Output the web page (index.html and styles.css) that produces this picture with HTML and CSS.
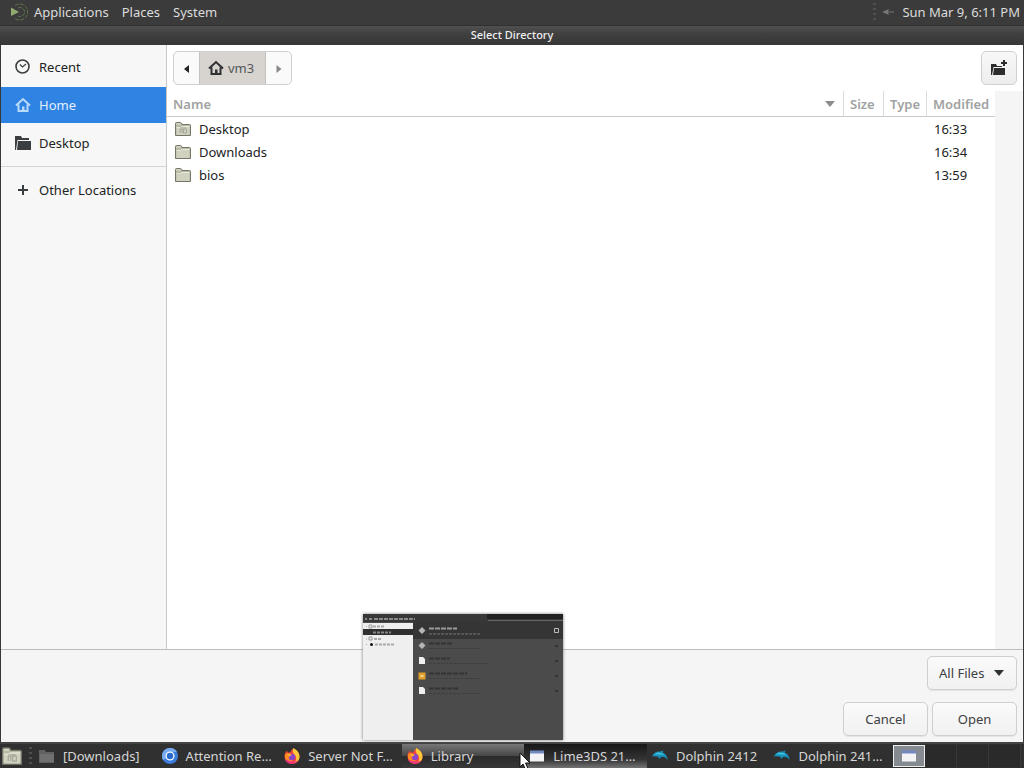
FILE: index.html
```html
<!DOCTYPE html>
<html lang="en">
<head>
<meta charset="utf-8">
<title>Select Directory</title>
<link rel="stylesheet" href="styles.css">
</head>
<body>
<svg class="defs" aria-hidden="true">
  <symbol id="firefox" viewBox="0 0 16 16">
    <path d="M8 1.5c4.300 0 7.500 3 7.500 7.200A7.300 7.300 0 0 1 8 16 7.300 7.300 0 0 1 .5 8.700C.5 6 1.600 3.800 3 2.500l.6 2L6 4.500z" fill="#f5443f"/>
    <path d="M9 0c4 2 6.500 4.500 6.500 8.700 0 3.300-2.500 5.800-5.500 6.300 2-2 3-4 1.500-7C10.500 6 8 5 9 0z" fill="#ffc83a"/>
    <path d="M1 6.500c1-1.500 3-2 5-1L4.500 8c0 3 2 4.500 5 4.500C7 15 2 13.500 1 10z" fill="#ff8a22"/>
    <circle cx="8" cy="9" r="3.200" fill="#8b45c9"/>
    <path d="M3.500 6.500C5 5.500 7 6 8 7.300c-2 0-2 1-3 1.700z" fill="#ffb02e"/>
    <path d="M1 11c2 5.500 10 6.500 13.500 1-3 2.500-8 2.500-13.500-1z" fill="#f0308a"/>
  </symbol>
  <symbol id="dolphin" viewBox="0 0 16 16">
    <path d="M0 8.500C1.500 4.500 5 3 8.500 3.500l3-1-.8 2c3 1.300 4.800 4 4.800 7.500-1.500-2.500-3.500-3.500-6-3.200L7 11 6.500 8.700C4 8 2 8 0 8.500z" fill="#1793bd"/>
    <path d="M2 6.500C5 4 9 4.300 12.500 6.800 9 6.200 5 6 2 6.500z" fill="#48c5dd"/>
  </symbol>
  <symbol id="house" viewBox="0 0 16 16">
    <path d="M1 8.500 8 2l7 6.500M3.500 7.500V14h9V7.500" fill="none" stroke="currentColor" stroke-width="2"/>
    <path d="M7 14V9.500h2.500V14z" fill="currentColor"/>
  </symbol>
  <symbol id="folder" viewBox="0 0 16 16">
    <path d="M.5 14.500v-12q0-1 1-1h4q1 0 1.500 2h7.500q1 0 1 1v10z" fill="#b9baa4" stroke="#74766a"/>
    <path d="M1.500 14V6.500h4l1.500-1h7.500V14z" fill="#d0d1bf"/>
    <path d="M1.500 6.500h4l1.500-1h7.500M1.500 3h4" fill="none" stroke="#e7e8da"/>
  </symbol>
  <symbol id="desk-folder" viewBox="0 0 16 16">
    <use href="#folder"/>
    <path d="M5 12V8.500h2V12M8.500 12V8h3v4zM5 7h6" fill="none" stroke="#a5a798"/>
  </symbol>
  <symbol id="dark-folder" viewBox="0 0 16 16">
    <path d="M0 1h6l1 2h7v2H2.500L1 15H0z" fill="currentColor"/>
    <path d="M3 6h13v9H2z" fill="currentColor"/>
  </symbol>
  <symbol id="window" viewBox="0 0 16 16">
    <path d="M1 3h14v10.500H1z" fill="#f2f3f5"/>
    <path d="M1 2.500h14v3H1z" fill="#7188c2"/>
  </symbol>
</svg>

<header class="panel">
  <nav class="menus">
    <svg class="logo" viewBox="0 0 18 18" aria-hidden="true"><path d="M1 4.500 9 9l-8 4z" fill="#91aa70"/><path d="M5 2.500a8 8 0 1 1 0 13M8 5a4.500 4.500 0 1 1 0 8" fill="none" stroke="#61754a" stroke-dasharray="4 1"/></svg>
    <a href="#">Applications</a>
    <a href="#">Places</a>
    <a href="#">System</a>
  </nav>
  <div class="tray">
    <span class="handle"></span>
    <svg class="tray-icon" viewBox="0 0 14 10" aria-hidden="true"><path d="M0 5l7-3-1 2.500h6v1H6l1 2.500z" fill="#777"/></svg>
    <time>Sun Mar 9, 6:11 PM</time>
  </div>
</header>

<main class="dialog">
  <h1 class="title">Select Directory</h1>
  <div class="browser">
    <nav class="places" aria-label="Places">
      <a class="place" href="#"><svg class="icon" viewBox="0 0 16 16"><circle cx="7.500" cy="7.500" r="6.500" fill="none" stroke="currentColor" stroke-width="1.600"/><path d="m5 5.500 2.500 2.500L11 5" fill="none" stroke="currentColor" stroke-width="1.200"/></svg>Recent</a>
      <a class="place current" href="#"><svg class="icon"><use href="#house"/></svg>Home</a>
      <a class="place" href="#"><svg class="icon"><use href="#dark-folder"/></svg>Desktop</a>
      <hr class="rule">
      <a class="place" href="#"><svg class="icon" viewBox="0 0 16 16"><path d="M8 3v10M3 8h10" stroke="currentColor" stroke-width="2"/></svg>Other Locations</a>
    </nav>
    <section class="files">
      <div class="pathbar">
        <div class="crumbs">
          <button class="step" aria-label="Back"><svg class="tri" viewBox="0 0 8 8"><path d="M6 0v8L1 4z" fill="#222"/></svg></button>
          <button class="crumb"><svg class="icon"><use href="#house"/></svg><span>vm3</span></button>
          <button class="step" aria-label="Forward"><svg class="tri" viewBox="0 0 8 8"><path d="M1.500 0v8l5-4z" fill="#888"/></svg></button>
        </div>
        <button class="new-folder" aria-label="Create Folder"><svg class="icon" viewBox="0 0 16 16"><path d="M0 4h5l1 2h5v1H2.500L1 15H0zM3 8h11v7H2z" fill="#2c2c2c"/><path d="M13 0v6M10 3h6" stroke="#2c2c2c" stroke-width="2"/></svg></button>
      </div>
      <div class="list">
        <table class="table">
          <thead><tr>
            <th class="name"><div class="sort">Name<svg class="sort-arrow" viewBox="0 0 10 6"><path d="M0 0h10L5 6z" fill="#8c8e8d"/></svg></div></th>
            <th class="size">Size</th><th class="type">Type</th><th class="modified">Modified</th>
          </tr></thead>
          <tbody>
            <tr><td><div class="file"><svg class="icon"><use href="#desk-folder"/></svg>Desktop</div></td><td></td><td></td><td>16:33</td></tr>
            <tr><td><div class="file"><svg class="icon"><use href="#folder"/></svg>Downloads</div></td><td></td><td></td><td>16:34</td></tr>
            <tr><td><div class="file"><svg class="icon"><use href="#folder"/></svg>bios</div></td><td></td><td></td><td>13:59</td></tr>
          </tbody>
        </table>
        <div class="gutter"></div>
      </div>
    </section>
  </div>
  <footer class="actions">
    <div class="filter">
      <select class="button filter-select" aria-label="File type"><option>All Files</option></select>
      <svg class="filter-arrow" viewBox="0 0 10 6" aria-hidden="true"><path d="M0 0h10L5 6z" fill="#2e3436"/></svg>
    </div>
    <div class="buttons">
      <button class="button">Cancel</button>
      <button class="button">Open</button>
    </div>
  </footer>
</main>

<footer class="taskbar">
  <button class="show-desktop" aria-label="Show Desktop"><svg class="desk-icon"><use href="#desk-folder"/></svg></button>
  <span class="handle"></span>
  <div class="tasks">
    <button class="task"><svg class="icon" viewBox="0 0 16 16"><path d="M0 2h6l1 2h8v11H0z" fill="#616161"/><path d="M1 6h14v8H1z" fill="#707070"/></svg><span>[Downloads]</span></button>
    <button class="task"><svg class="icon" viewBox="0 0 16 16"><circle cx="8" cy="8" r="8" fill="#3b7ddd"/><path d="M8 0a8 8 0 0 0-7 12l4-2 3-6h7A8 8 0 0 0 8 0z" fill="#78abed"/><circle cx="8" cy="8" r="4.500" fill="#f4f8ff"/><circle cx="8" cy="8" r="3.200" fill="#2869c9"/></svg><span>Attention Re…</span></button>
    <button class="task"><svg class="icon"><use href="#firefox"/></svg><span>Server Not F…</span></button>
    <div class="task-slot">
      <button class="task hover"><svg class="icon"><use href="#firefox"/></svg><span>Library</span></button>
      <svg class="preview" viewBox="0 0 200 126" aria-hidden="true">
        <path d="M0 0h200v126H0z" fill="#4b4b4b"/>
        <path d="M0 0h200v8H0z" fill="#373737"/>
        <path d="M124 0h76v5h-76z" fill="#222"/>
        <path d="M125 6.500h75" stroke="#666"/>
        <path d="M50 8h150v17H50z" fill="#353535"/>
        <path d="M0 9h50v117H0z" fill="#efefef"/>
        <path d="M0 15h50v6H0z" fill="#303030"/>
        <path d="M2 5h2M6 5h3M11 5h41" stroke="#8a8a8a" stroke-width="2" stroke-dasharray="4 1"/>
        <path d="M10 12.500h12M11 25h8M12 30.500h20" stroke="#aaa" stroke-width="2" stroke-dasharray="3 1"/>
        <path d="M10 18.500h18" stroke="#888" stroke-width="2" stroke-dasharray="3 1"/>
        <path d="M3 12.500h1M3 25h1M3 30.500h1" stroke="#aaa"/>
        <path d="M6 11h3v3H6zM6 23h3v3H6z" fill="none" stroke="#999"/>
        <circle cx="8.500" cy="30.500" r="1.500" fill="#111"/>
        <path d="m59 13 3.500 3.500L59 20l-3.500-3.500zM59 28l3.500 3.500L59 35l-3.500-3.500z" fill="#b5b5b5"/>
        <path d="M56 43h4l2 2v5h-6zM56 73h4l2 2v5h-6z" fill="#f0f0f0"/>
        <path d="M55.500 58.500h7v7h-7z" fill="#e0a02a"/><path d="M57.500 62h3" stroke="#fff"/>
        <path d="M66 14.500h28" stroke="#999" stroke-width="2" stroke-dasharray="5 1"/>
        <path d="M66 20h52" stroke="#777" stroke-dasharray="3 1"/>
        <path d="M66 29.500h24M66 44.500h21M66 59.500h38M66 74.500h29" stroke="#343434" stroke-width="2" stroke-dasharray="5 1"/>
        <path d="M66 34.500h52M66 49.500h61M66 64.500h52M66 79.500h52" stroke="#3e3e3e" stroke-dasharray="3 1"/>
        <path d="M191.500 14.500h4v4h-4z" fill="none" stroke="#bbb"/>
        <path d="M192 32h3M192 47h3M192 62h3M192 77h3" stroke="#343434" stroke-width="2"/>
      </svg>
      <svg class="pointer" viewBox="0 0 12 18" aria-hidden="true"><path d="M1 1v14l3-3 2.500 5.500 2.500-1L6.500 11H11z" fill="#fff" stroke="#111"/></svg>
    </div>
    <button class="task active"><svg class="icon"><use href="#window"/></svg><span>Lime3DS 21…</span></button>
    <button class="task"><svg class="icon"><use href="#dolphin"/></svg><span>Dolphin 2412</span></button>
    <button class="task"><svg class="icon"><use href="#dolphin"/></svg><span>Dolphin 241…</span></button>
  </div>
  <div class="workspaces">
    <button class="workspace selected" aria-label="Workspace 1"><svg class="icon"><use href="#window"/></svg></button>
    <button class="workspace" aria-label="Workspace 2"></button>
    <button class="workspace" aria-label="Workspace 3"></button>
    <button class="workspace" aria-label="Workspace 4"></button>
  </div>
</footer>
</body>
</html>
```
FILE: styles.css
```css
* { box-sizing: border-box; }

body {
  margin: 0;
  height: 100vh;
  display: flex;
  flex-direction: column;
  overflow: hidden;
  background: #383838;
  color: #202324;
  font: 13px/18px "Noto Sans", sans-serif;
}

button, select { font: inherit; color: inherit; margin: 0; padding: 0; border: 0; background: none; }
a { color: inherit; text-decoration: none; }
.defs { position: absolute; width: 0; height: 0; }
.icon { width: 16px; height: 16px; flex: none; }

/* Top panel */
.panel {
  display: flex;
  justify-content: space-between;
  align-items: center;
  height: 25px;
  padding: 0 4px 2px 10px;
  background: #3b3b3b;
  color: #dcdcdc;
}
.menus { display: flex; align-items: center; gap: 13px; }
.logo { width: 18px; height: 18px; margin-right: -7px; }
.tray { display: flex; align-items: center; gap: 6px; }
.tray-icon { width: 14px; height: 10px; }
.handle { width: 3px; height: 18px; flex: none; background: repeating-linear-gradient(#505050 0 2px, transparent 2px 5px); }

/* Dialog window */
.dialog {
  flex: 1;
  min-height: 0;
  display: flex;
  flex-direction: column;
}
.title {
  margin: 0;
  height: 20px;
  background: linear-gradient(#505050, #404040 40%, #373737);
  border-top: 1px solid #303030;
  color: #eee;
  font-size: 11px;
  line-height: 18px;
  font-weight: 500;
  text-align: center;
}
.browser {
  flex: 1;
  min-height: 0;
  display: flex;
  margin: 0 1px;
  background: #fff;
}
.places {
  width: 166px;
  flex: none;
  padding-top: 4px;
  background: #f7f7f7;
  border-right: 1px solid #c9c9c9;
}
.place {
  display: flex;
  align-items: center;
  gap: 8px;
  height: 36px;
  margin-bottom: 2px;
  padding-left: 14px;
}
.place .icon { color: #3b3e40; }
.place.current { background: #2f83e3; color: #e4effb; }
.place.current .icon { color: #b9dafb; }
.rule { margin: 5px 0; border: 0; border-top: 1px solid #d4d4d4; }

.files { flex: 1; min-width: 0; display: flex; flex-direction: column; }
.pathbar { display: flex; justify-content: space-between; padding: 6px; }
.crumbs {
  display: flex;
  height: 34px;
  border: 1px solid #cfcfcf;
  border-radius: 5px;
  overflow: hidden;
  background: #fafafa;
}
.step { width: 25px; }
.tri { width: 8px; height: 8px; }
.crumb {
  display: flex;
  align-items: center;
  gap: 4px;
  padding: 0 11px 0 8px;
  background: #d7d3cf;
  border: solid #c6c2be;
  border-width: 0 1px;
  color: #55585a;
}
.crumb .icon { color: #2e3033; }
.new-folder {
  display: flex;
  align-items: center;
  justify-content: center;
  width: 36px;
  height: 34px;
  border: 1px solid #d0d0d0;
  border-radius: 5px;
  background: linear-gradient(#f8f8f8, #ededed);
}

.list { flex: 1; display: flex; align-items: stretch; }
.table { flex: 1; align-self: flex-start; border-collapse: separate; border-spacing: 0; table-layout: fixed; width: 100%; }
.table th {
  height: 26px;
  padding: 0 6px;
  border-bottom: 1px solid #cacaca;
  border-left: 1px solid #dcdcdc;
  color: #a0a2a1;
  text-align: left;
  font-weight: 600;
}
.table th.name { border-left: 0; }
.size { width: 40px; }
.type { width: 43px; }
.modified { width: 69px; }
.sort { display: flex; align-items: center; justify-content: space-between; }
.sort-arrow { width: 10px; height: 6px; margin-right: 2px; }
.table td { height: 23px; padding: 0 8px; }
.file { display: flex; align-items: center; gap: 8px; }
.gutter { width: 28px; flex: none; background: #f5f5f5; }

.actions {
  display: flex;
  flex-direction: column;
  align-items: flex-end;
  gap: 12px;
  margin: 0 1px;
  padding: 6px;
  background: #f5f5f5;
  border-top: 1px solid #bdbdbd;
}
.buttons { display: flex; gap: 4px; }
.button {
  width: 85px;
  height: 34px;
  border: 1px solid #cfcfcf;
  border-radius: 5px;
  background: linear-gradient(#fafafa, #f1f1f1);
  box-shadow: 0 1px 1px #e3e3e3;
  color: #3c4042;
}
.filter { display: grid; align-items: center; }
.filter > * { grid-area: 1 / 1; }
.filter-select { appearance: none; width: 90px; padding-left: 11px; }
.filter-arrow { width: 10px; height: 6px; justify-self: end; margin-right: 13px; pointer-events: none; }

/* Bottom panel */
.taskbar {
  display: flex;
  align-items: center;
  height: 26px;
  padding-right: 3px;
  border-top: 2px solid #444;
  background: #303030;
  color: #d6d6d6;
}
.show-desktop { display: flex; width: 22px; padding-left: 2px; margin-right: 7px; }
.desk-icon { width: 20px; height: 20px; }
.tasks { flex: 1; min-width: 0; display: flex; height: 24px; margin: 0 1px 0 2px; }
.task, .task-slot { flex: 1 1 5px; min-width: 0; }
.task {
  display: flex;
  align-items: center;
  gap: 8px;
  height: 24px;
  padding-left: 5px;
  text-align: left;
  white-space: nowrap;
}
.task-slot { position: relative; }
.task-slot .task { width: 100%; }
.hover { background: linear-gradient(#777, #484848 48%, #2b2b2b 52%, #383838); }
.active { background: linear-gradient(#171717, #343436 65%, #747474); }
.preview {
  position: absolute;
  bottom: 28px;
  left: 50%;
  width: 200px;
  height: 126px;
  margin-left: -100px;
  box-shadow: 0 0 3px #777;
}
.pointer { position: absolute; z-index: 1; right: -7px; top: 8px; width: 12px; height: 18px; }

.workspaces { display: flex; align-self: stretch; }
.workspace { width: 32px; height: 22px; margin-top: 1px; background: #2a2a2a; border-right: 1px solid #393939; }
.workspace.selected { display: flex; align-items: center; justify-content: center; background: #858b91; border: 1px solid #eee; }
```
